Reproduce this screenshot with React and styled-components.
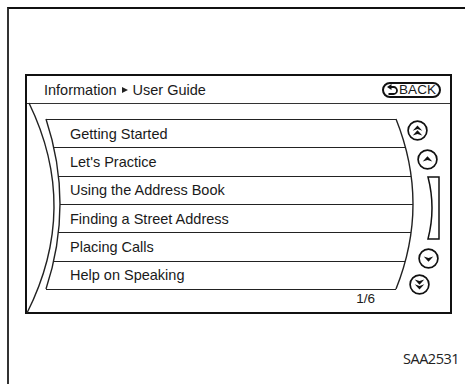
import React from 'react'
import styled, { createGlobalStyle } from 'styled-components'

const Global = createGlobalStyle`
  body { margin: 0; background: #fff; }
`

const Page = styled.div`
  width: 465px;
  height: 384px;
  overflow: hidden;
  background: #fff;
`

const Frame = styled.div`
  margin: 7px 0 0 7px;
  height: 377px;
  box-sizing: border-box;
  border-top: 2px solid #111;
  border-left: 2px solid #333;
  padding: 65px 0 0 16px;
`

const Panel = styled.div`
  width: 427px;
  height: 240px;
  box-sizing: border-box;
  border: 2px solid #111;
  font-family: "Liberation Sans", Arial, sans-serif;
  color: #1a1a1a;
`

const Header = styled.div`
  height: 28px;
  box-sizing: border-box;
  border-bottom: 1px solid #333;
  display: flex;
  align-items: center;
  justify-content: space-between;
  padding: 0 9px 0 17px;
`

const Crumb = styled.div`
  font-size: 14.5px;
  display: flex;
  align-items: center;
`

const Caret = styled.span`
  display: inline-block;
  width: 0;
  height: 0;
  border-left: 6px solid #222;
  border-top: 3.5px solid transparent;
  border-bottom: 3.5px solid transparent;
  margin: 0 5px 0 5px;
`

const BackButton = styled.div`
  width: 59px;
  height: 16px;
  box-sizing: border-box;
  border: 2px solid #111;
  border-radius: 8px;
  display: flex;
  align-items: center;
  gap: 1px;
  padding-left: 3px;
  font-size: 13.5px;
  letter-spacing: 0.1px;
  line-height: 1;
`

const Body = styled.div`
  position: relative;
  height: 208px;
  display: flex;
`

const ListArea = styled.div`
  width: 378px;
  padding-top: 15px;
  box-sizing: border-box;
`

const Row = styled.div`
  height: ${p => p.$h}px;
  box-sizing: border-box;
  margin-left: ${p => p.$l}px;
  margin-right: ${p => p.$r}px;
  padding-left: ${p => p.$pad}px;
  border-top: 1px solid #222;
  display: flex;
  align-items: center;
  font-size: 14.5px;
  white-space: nowrap;
`

const EndLine = styled.div`
  margin-left: ${p => p.$l}px;
  margin-right: ${p => p.$r}px;
  border-top: 1px solid #222;
`

const PageCount = styled.div`
  margin-top: 2px;
  padding-right: 30px;
  text-align: right;
  font-size: 13.5px;
  line-height: 14px;
`

const Curves = styled.svg`
  position: absolute;
  left: 0;
  top: 0;
  overflow: visible;
  pointer-events: none;
`

const ScrollCol = styled.div`
  width: 45px;
  display: flex;
  flex-direction: column;
`

const ScrollButton = styled.svg`
  display: block;
  flex: none;
  margin-left: ${p => p.$dx}px;
  margin-top: ${p => p.$dy}px;
`

const Caption = styled.div`
  margin-top: 36px;
  padding-right: 6px;
  text-align: right;
  font-family: "Open Sans", "Noto Sans", sans-serif;
  font-size: 14.5px;
  letter-spacing: -0.5px;
  line-height: 18px;
  color: #222;
`

const items = [
  'Getting Started',
  "Let's Practice",
  'Using the Address Book',
  'Finding a Street Address',
  'Placing Calls',
  'Help on Speaking',
]

const ROW_H = 170 / 6
const TOP = 15
const leftAt = y => { const t = (y - TOP) / 170; return 19 + 56 * t * (1 - t) }
const rightAt = y => { const t = (y - TOP) / 170; return 369 + 68 * t * (1 - t) }

const BackIcon = () => (
  <svg width="11" height="11" viewBox="0 0 11 11">
    <polygon points="0,3 4.5,0 4.5,6" fill="#111" />
    <path d="M3.5 3 H6.5 A3.5 3.5 0 0 1 6.5 10 H1.5" fill="none" stroke="#111" strokeWidth="1.8" />
  </svg>
)

const Head = ({ y }) => (
  <path d={`M-4.8 ${y + 2.7} L0 ${y - 2.7} L4.8 ${y + 2.7} L0 ${y + 1} Z`} fill="#111" />
)

const Circle = ({ dx, dy, heads, flip }) => (
  <ScrollButton $dx={dx} $dy={dy} width="21" height="21" viewBox="-10.5 -10.5 21 21">
    <circle r="9.4" fill="#fff" stroke="#111" strokeWidth="1.7" />
    <g transform={flip ? 'scale(1,-1)' : undefined}>
      {heads.map(y => <Head key={y} y={y} />)}
    </g>
  </ScrollButton>
)

export default function App() {
  return (
    <Page>
      <Global />
      <Frame>
        <Panel>
          <Header>
            <Crumb>Information<Caret />User Guide</Crumb>
            <BackButton><BackIcon />BACK</BackButton>
          </Header>
          <Body>
            <Curves width="423" height="208">
              <path d="M2 -1 Q53 104 0 209" fill="none" stroke="#222" strokeWidth="1.4" />
              <path d="M19 15 Q47 100 19 185" fill="none" stroke="#222" strokeWidth="1.4" />
              <path d="M369 15 Q403 100 369 185" fill="none" stroke="#222" strokeWidth="1.4" />
            </Curves>
            <ListArea>
              {items.map((label, i) => {
                const y = TOP + i * ROW_H
                const l = leftAt(y)
                return (
                  <Row key={label} $h={ROW_H} $l={l} $r={378 - rightAt(y)} $pad={43 - l}>
                    {label}
                  </Row>
                )
              })}
              <EndLine $l={leftAt(185)} $r={378 - rightAt(185)} />
              <PageCount>1/6</PageCount>
            </ListArea>
            <ScrollCol>
              <Circle dx={1.5} dy={15.5} heads={[-2.4, 2.4]} />
              <Circle dx={11.5} dy={8} heads={[-0.6]} />
              <ScrollButton $dx={22} $dy={6.5} width="13" height="64" viewBox="0 0 13 64">
                <path d="M1 1 H12 V63 H1 Q9 32 1 1 Z" fill="none" stroke="#111" strokeWidth="1.5" />
              </ScrollButton>
              <Circle dx={12.5} dy={7.5} heads={[-0.6]} flip />
              <Circle dx={3.5} dy={5} heads={[-2.4, 2.4]} flip />
            </ScrollCol>
          </Body>
        </Panel>
        <Caption>SAA2531</Caption>
      </Frame>
    </Page>
  )
}
